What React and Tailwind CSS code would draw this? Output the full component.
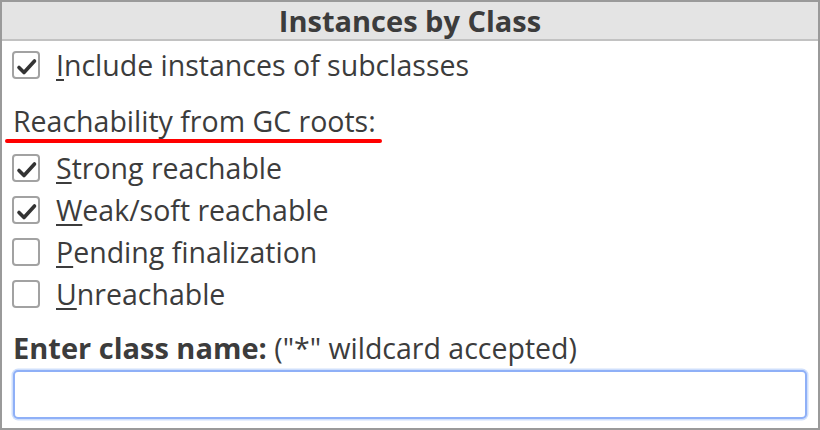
import React from "react";

const font = { fontFamily: '"Open Sans", "Noto Sans", sans-serif' };

function Check({ checked }) {
  return (
    <div className="w-[28px] h-[28px] shrink-0 rounded-[4px] border-2 border-[#a2a2a2] bg-white flex items-center justify-center">
      {checked && (
        <svg width="28" height="28" viewBox="0 0 28 28" className="-m-[2px]">
          <polyline points="7,16.5 12,21.5 22.5,10" fill="none" stroke="#333333" strokeWidth="3.6" strokeLinecap="round" strokeLinejoin="round" />
        </svg>
      )}
    </div>
  );
}

function Row({ checked, first, rest }) {
  return (
    <div className="h-[42px] flex items-center pl-[10px]">
      <Check checked={checked} />
      <span className="ml-[16px] text-[28.5px] text-[#3c3c3c] leading-none whitespace-nowrap">
        <span className="underline decoration-2 underline-offset-[3px]">{first}</span>
        {rest}
      </span>
    </div>
  );
}

export default function App() {
  return (
    <div style={font} className="w-[820px] h-[430px] bg-white border-2 border-[#9a9a9a] flex flex-col overflow-hidden">
      <div className="h-[39px] shrink-0 bg-[#e4e4e4] border-b-2 border-[#c2c2c2] flex items-center justify-center">
        <span className="text-[29px] font-bold text-[#3c3c3c] leading-none">Instances by Class</span>
      </div>
      <div className="pt-[3px] flex flex-col">
        <Row checked first="I" rest="nclude instances of subclasses" />
        <div className="h-[61px] flex flex-col justify-end">
          <div className="pl-[11px] text-[28.5px] text-[#3c3c3c] leading-[30px] whitespace-nowrap">Reachability from GC roots:</div>
          <div className="ml-[3px] mt-[3px] mb-[4px] w-[377px] h-[4px] bg-[#ff0000] rounded-full" />
        </div>
        <Row checked first="S" rest="trong reachable" />
        <Row checked first="W" rest="eak/soft reachable" />
        <Row first="P" rest="ending finalization" />
        <Row first="U" rest="nreachable" />
        <div className="mt-[18px] pl-[11px] text-[28.5px] text-[#3c3c3c] leading-[30px] whitespace-nowrap">
          <span className="font-bold text-[29px]">Enter class name:</span> ("*" wildcard accepted)
        </div>
        <div className="mx-[11px] mt-[7px] h-[49px] rounded-[5px] border-2 border-[#8fb0f7] shadow-[0_0_0_1.5px_#cfdffc] bg-white" />
      </div>
    </div>
  );
}
